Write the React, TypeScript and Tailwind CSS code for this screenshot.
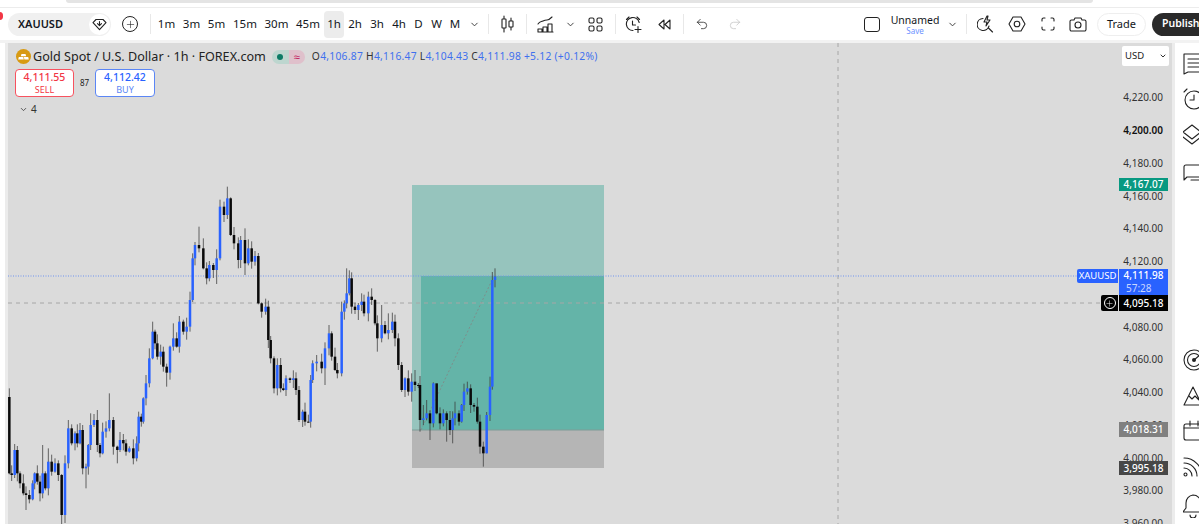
import React from "react";
import { ChevronDown, Undo2, Redo2, Plus } from "lucide-react";

const A: number[][] = [[28,880,625],[35,885],[44,810],[52,880],[60,910],[70,940],[78,945,0,990],[88,958],[98,910],[104,880],[112,905],[120,940],[128,880,795],[136,925],[145,845,805],[155,875],[165,850],[175,885],[185,1005,0,1032],[195,850],[205,745,720],[215,790],[225,760],[232,790],[240,750],[248,865],[258,860,0,925],[265,795],[272,735,700],[282,720],[292,795,690],[300,820],[308,755],[318,745],[328,720,640],[340,800],[352,810,0,850],[360,780],[370,790],[378,815],[388,805],[400,835],[410,790],[416,710],[424,725],[430,655],[438,610,585],[448,535,505],[458,455,425],[465,490],[472,530],[482,515],[490,560],[500,578,0,620],[510,500],[520,475,430],[530,500],[538,425,408],[550,455],[560,440],[570,360,335],[578,235],[585,195],[597,205,140],[610,265,175],[620,295],[628,255],[640,270],[650,235,0,312],[660,80],[672,105],[682,55,20],[692,165],[702,190],[715,240,0,265],[722,180],[735,250,145,285],[745,205],[755,245],[765,228],[775,370],[785,395],[797,380],[805,480],[812,535],[822,625,0,640],[832,555,535],[842,625],[850,630],[858,595],[870,600],[880,595],[888,630],[897,720]];
const B: number[][] = [[128,485],[135,515],[145,515],[152,390],[158,340],[170,335,315],[185,355],[195,295,0,405],[207,250,225],[215,320],[225,360],[232,370,0,385],[245,185,155],[253,160],[260,130,55],[268,85],[275,170],[285,180],[295,165,0,210],[305,155,130],[312,190],[325,140,125],[335,150,115],[345,220],[352,265,0,305],[365,225,165],[375,250],[385,240,190],[397,215],[405,265],[415,345],[425,420],[435,385],[445,425],[455,395,370,455],[465,405,360],[475,405],[480,510,0,545],[490,505,465],[500,490,450],[510,520,0,570],[520,400],[530,490,425],[540,520],[550,490],[560,510,0,575],[570,540],[578,505,0,580],[585,490,455],[597,515],[605,465],[612,425],[622,415,395],[632,465],[642,470],[652,515],[660,590],[670,610,0,650],[680,495,0,610],[690,410,380],[697,90],[705,80,55,112]];

const candles = [
  ...A.map(([x, y, t, b]) => [x / 3, 180 + y / 3, t ? 180 + t / 3 : 0, b ? 180 + b / 3 : 0]),
  ...B.map(([x, y, t, b]) => [260 + x / 3, 250 + y / 3, t ? 250 + t / 3 : 0, b ? 250 + b / 3 : 0]),
];

function Candles() {
  return (
    <>
      {candles.map(([x, c, t, b], i) => {
        const o = i === 0 ? 397 : candles[i - 1][1];
        const top = Math.min(o, c);
        const bot = Math.max(o, c);
        const up = 1 + ((i * 7) % 9);
        const dn = 1 + ((i * 5) % 8);
        const blue = c < o;
        return (
          <g key={i}>
            <line x1={x} x2={x} y1={t || top - up} y2={b || bot + dn} stroke="#3a3a3a" strokeOpacity="0.75" strokeWidth="1" />
            <rect x={x - 1.25} y={top} width="2.5" height={Math.max(bot - top, 1)} fill={blue ? "#2962ff" : "#0a0a0a"} />
          </g>
        );
      })}
    </>
  );
}

const frames = [
  ["1m", "w-[25px]"], ["3m", "w-[25px]"], ["5m", "w-[25px]"], ["15m", "w-[32px]"], ["30m", "w-[31px]"], ["45m", "w-[32px]"],
  ["1h", "w-[20px] bg-[#ececec] rounded"], ["2h", "w-[22px]"], ["3h", "w-[22px]"], ["4h", "w-[22px]"], ["D", "w-[17px]"], ["W", "w-[19px]"], ["M", "w-[18px]"],
];

const Divider = () => <div className="h-[20px] w-px bg-[#e8e8e8] shrink-0" />;

const ticks = ["4,220.00", "4,200.00", "4,180.00", "4,160.00", "4,140.00", "4,120.00", "", "4,080.00", "4,060.00", "4,040.00", "4,020.00", "4,000.00", "3,980.00", "3,960.00"];

const stroke = { fill: "none", stroke: "#222", strokeWidth: 1.1, strokeLinecap: "round", strokeLinejoin: "round" } as const;

export default function App() {
  return (
    <div className="relative w-[1199px] h-[524px] overflow-hidden bg-white flex flex-col font-['Noto_Sans',sans-serif] text-[#131722]">
      {/* browser strip */}
      <div className="h-[8px] shrink-0 bg-white border-b border-[#ececec]">
        <div className="ml-[66px] w-[1027px] h-[3px] bg-[#e4e4e4] rounded-b-md" />
      </div>
      <div className="absolute left-[-4px] top-[12px] w-[7px] h-[8px] rounded-full bg-[#f23645]" />

      {/* toolbar */}
      <div className="h-[32px] shrink-0 flex items-center bg-white">
        <div className="ml-[8px] w-[103px] h-[23px] rounded-full bg-[#f0f0f0] flex items-center pl-[10px] pr-[1px] justify-between shrink-0">
          <span className="text-[11px] font-semibold text-[#131722]">XAUUSD</span>
          <span className="w-[21px] h-[21px] rounded-full bg-white flex items-center justify-center">
            <svg width="15" height="13" viewBox="0 0 15 13">
              <path d="M4 1.5h7l3 3.2-6.5 7-6.5-7z" {...stroke} />
              <path d="M7.5 3.5v4M5.5 5.7l2 2 2-2" {...stroke} />
            </svg>
          </span>
        </div>
        <span className="ml-[11px] w-[16px] h-[16px] rounded-full border border-[#222] flex items-center justify-center shrink-0">
          <Plus size={11} strokeWidth={1.3} color="#222" />
        </span>
        <div className="ml-[12px] mr-[3px]"><Divider /></div>
        {frames.map(([t, w]) => (
          <span key={t} className={`${w} h-[27px] flex items-center justify-center text-[11.5px] shrink-0`}>{t}</span>
        ))}
        <span className="w-[20px] flex justify-center shrink-0"><ChevronDown size={11} color="#333" /></span>
        <div className="ml-[4px]"><Divider /></div>
        <span className="w-[37px] flex justify-center shrink-0">
          <svg width="15" height="18" viewBox="0 0 15 18">
            <path d="M4 1v16M11 3v12" {...stroke} />
            <rect x="2" y="4" width="4" height="9" fill="#fff" stroke="#222" strokeWidth="1.1" rx="0.5" />
            <rect x="9" y="6" width="4" height="6" fill="#fff" stroke="#222" strokeWidth="1.1" rx="0.5" />
          </svg>
        </span>
        <Divider />
        <span className="w-[36px] flex justify-center shrink-0">
          <svg width="17" height="17" viewBox="0 0 17 17">
            <path d="M1 8c2-3 3-2 5-3s3-1 4-1 3-1 5-3" {...stroke} />
            <path d="M1 16v-3h4v3M6 16v-5h4v5M11 16V8h4v8M1 16h15" {...stroke} />
          </svg>
        </span>
        <span className="-ml-[1px] w-[16px] flex justify-center shrink-0"><ChevronDown size={11} color="#333" /></span>
        <span className="ml-[8px] w-[18px] flex justify-center shrink-0">
          <svg width="15" height="15" viewBox="0 0 15 15">
            <rect x="1" y="1" width="5" height="5" rx="1.5" {...stroke} />
            <rect x="9" y="1" width="5" height="5" rx="1.5" {...stroke} />
            <rect x="1" y="9" width="5" height="5" rx="1.5" {...stroke} />
            <rect x="9" y="9" width="5" height="5" rx="1.5" {...stroke} />
          </svg>
        </span>
        <div className="ml-[11px]"><Divider /></div>
        <span className="w-[35px] flex justify-center shrink-0">
          <svg width="17" height="17" viewBox="0 0 17 17">
            <path d="M14.2 6.5A6.5 6.5 0 1 0 8 14.5M1.5 3.5L4 1M12 1l2.5 2.5M7.5 5v4h3M13 10.5v6M10 13.5h6" {...stroke} />
          </svg>
        </span>
        <span className="w-[26px] flex justify-center shrink-0">
          <svg width="13" height="11" viewBox="0 0 13 11">
            <path d="M6 1L1 5.500 6 10zM12 1L7 5.500 12 10z" {...stroke} />
          </svg>
        </span>
        <span className="ml-[6px]"><Divider /></span>
        <span className="w-[36px] flex justify-center shrink-0"><Undo2 size={14} strokeWidth={1.3} color="#222" /></span>
        <span className="ml-[2px] w-[26px] flex justify-center shrink-0"><Redo2 size={14} strokeWidth={1.3} color="#c4c4c4" /></span>

        <span className="ml-[116px] w-[16px] h-[15px] rounded-[3px] border border-[#222] shrink-0" />
        <div className="ml-[11px] w-[48px] flex flex-col items-center leading-none shrink-0">
          <span className="text-[10.5px] leading-[12px]">Unnamed</span>
          <span className="text-[8px] leading-[9px] text-[#2962ff] opacity-70">Save</span>
        </div>
        <span className="ml-[6px] w-[15px] flex justify-center shrink-0"><ChevronDown size={11} color="#333" /></span>
        <span className="ml-[6px]"><Divider /></span>
        <span className="ml-[9px] w-[18px] flex justify-center shrink-0">
          <svg width="17" height="18" viewBox="0 0 17 18">
            <path d="M6 3.500A6 6 0 1 0 12 11M11.500 13l4 4" {...stroke} />
            <path d="M10 1L7 7h3l-1 4 4-6h-3l1-4z" {...stroke} />
          </svg>
        </span>
        <span className="ml-[13px] w-[20px] flex justify-center shrink-0">
          <svg width="18" height="16" viewBox="0 0 18 16">
            <path d="M5 1h8l4 7-4 7H5L1 8z" {...stroke} />
            <circle cx="9" cy="8" r="2.800" {...stroke} />
          </svg>
        </span>
        <span className="ml-[14px] w-[14px] flex justify-center shrink-0">
          <svg width="14" height="14" viewBox="0 0 14 14">
            <path d="M1 4V2.500A1.500 1.500 0 0 1 2.500 1H4M10 1h1.500A1.500 1.500 0 0 1 13 2.500V4M13 10v1.500a1.500 1.500 0 0 1-1.500 1.500H10M4 13H2.500A1.500 1.500 0 0 1 1 11.500V10" {...stroke} />
          </svg>
        </span>
        <span className="ml-[13px] w-[20px] flex justify-center shrink-0">
          <svg width="18" height="15" viewBox="0 0 18 15">
            <path d="M1 4.500a1.500 1.500 0 0 1 1.500-1.500H5l1-2h6l1 2h2.500A1.500 1.500 0 0 1 17 4.500v8a1.500 1.500 0 0 1-1.500 1.500h-13A1.500 1.500 0 0 1 1 12.500z" {...stroke} />
            <circle cx="9" cy="8" r="3" {...stroke} />
          </svg>
        </span>
        <span className="ml-[9px] w-[49px] h-[23px] rounded-full border border-[#eeeeee] flex items-center justify-center text-[11px] shrink-0">Trade</span>
        <span className="ml-[6px] w-[60px] h-[23px] rounded-full bg-[#2a2a2a] text-white flex items-center pl-[10px] text-[10.5px] font-semibold shrink-0">Publish</span>
      </div>

      <div className="h-[3px] shrink-0 bg-[#f2f2f2]" />

      {/* main */}
      <div className="flex-1 flex min-h-0">
        <div className="w-[5px] bg-white shrink-0" />
        <div className="w-[3px] bg-[#ececec] shrink-0" />

        {/* chart */}
        <div className="w-[1164px] shrink-0 relative bg-[#dbdbdb] overflow-hidden">
          <svg className="absolute inset-0" width="1164" height="481" viewBox="8 43 1164 481">
            <rect x="412" y="185" width="192" height="91" fill="#96c4bd" />
            <rect x="412" y="276" width="9" height="154" fill="#96c4bd" />
            <rect x="421" y="276" width="183" height="154" fill="#64b4a8" />
            <rect x="412" y="430" width="192" height="38" fill="#b5b5b5" />
            <line x1="412" x2="604" y1="430" y2="430" stroke="#7f9c97" strokeWidth="1" />
            <line x1="421" y1="430" x2="493" y2="278" stroke="#7d8f8b" strokeWidth="1" strokeDasharray="2 2" />
            <line x1="838" x2="838" y1="43" y2="524" stroke="#a6a6a6" strokeWidth="1" strokeDasharray="4 4" />
            <line x1="8" x2="1101" y1="303" y2="303" stroke="#a6a6a6" strokeWidth="1" strokeDasharray="4 4" />
            <line x1="8" x2="1078" y1="276" y2="276" stroke="#6f93ee" strokeWidth="1" strokeDasharray="1 1.500" />
            <Candles />
          </svg>

          {/* legend */}
          <div className="absolute left-[7px] top-[5px] flex flex-col items-start">
            <div className="flex items-center h-[17px] whitespace-nowrap">
              <svg width="15" height="15" viewBox="0 0 15 15" className="shrink-0 ml-[1px]">
                <circle cx="7.500" cy="7.500" r="7.500" fill="#d89a12" />
                <path d="M5.500 5h4l.7 2.200H4.800zM2.800 8h4.400l.6 2.400H2.200zM7.800 8h4.400l.6 2.400H8.400z" fill="#fff" />
              </svg>
              <span className="ml-[2px] text-[12.6px] leading-[17px] text-[#222]">Gold Spot / U.S. Dollar · 1h · FOREX.com</span>
              <span className="ml-[6px] flex h-[14px] w-[33px] rounded-full overflow-hidden">
                <span className="w-[17px] bg-[#bdd6cf] flex items-center justify-center"><span className="w-[6px] h-[6px] rounded-full bg-[#0b7a65]" /></span>
                <span className="w-[16px] bg-[#dfc0cb] flex items-center justify-center text-[#c2185b] text-[11px] leading-[14px]">≈</span>
              </span>
              <span className="ml-[7px] text-[10.3px] tracking-[0.26px] text-[#3f70ee]"><span className="text-[#333]">O</span>4,106.87 <span className="text-[#333]">H</span>4,116.47 <span className="text-[#333]">L</span>4,104.43 <span className="text-[#333]">C</span>4,111.98 +5.12 (+0.12%)</span>
            </div>
            <div className="mt-[4px] flex items-center">
              <div className="w-[59px] h-[28px] rounded-[4px] border border-[#f7525f] bg-white flex flex-col items-center justify-center leading-none">
                <span className="text-[10.5px] leading-[13px] font-medium text-[#f23645]">4,111.55</span>
                <span className="text-[9px] leading-[11px] text-[#f23645]">SELL</span>
              </div>
              <span className="w-[21px] text-center text-[8px] text-[#222]">87</span>
              <div className="w-[60px] h-[28px] rounded-[4px] border border-[#5b86f5] bg-white flex flex-col items-center justify-center leading-none">
                <span className="text-[10.5px] leading-[13px] font-medium text-[#2962ff]">4,112.42</span>
                <span className="text-[9px] leading-[11px] text-[#5b86f5]">BUY</span>
              </div>
            </div>
            <div className="mt-[6px] ml-[4px] flex items-center gap-[3px] text-[10px] leading-[13px] text-[#333]">
              <ChevronDown size={9} color="#333" />
              <span>4</span>
            </div>
          </div>

          {/* currency */}
          <div className="absolute left-[1114px] top-[3px] w-[47px] h-[20px] rounded-[2px] bg-white flex items-center justify-between pl-[3px] pr-[2px] text-[9.5px] text-[#222]">
            <span>USD</span>
            <ChevronDown size={8} strokeWidth={3} color="#333" />
          </div>

          {/* price scale */}
          <div className="absolute right-[9px] top-[38.500px] flex flex-col items-end">
            {ticks.map((t, i) => (
              <div key={i} className={`h-[32.750px] flex items-center text-[10px] ${t === "4,200.00" ? "font-semibold text-[#111]" : "text-[#333]"}`}>{t}</div>
            ))}
          </div>

          {/* price tags */}
          <div className="absolute left-[1111px] top-[135px] w-[49px] h-[13px] bg-[#089981] text-white text-[10px] leading-[13px] text-center font-medium">4,167.07</div>
          <div className="absolute left-[1069px] top-[226px] w-[41px] h-[14px] bg-[#2962ff] rounded-l-[2px] text-white text-[9.500px] leading-[14px] text-center">XAUUSD</div>
          <div className="absolute left-[1111px] top-[226px] w-[49px] h-[26px] bg-[#2962ff] text-white text-[10px] leading-[13px] text-center font-medium">
            <div>4,111.98</div>
            <div className="text-[#c9d7ff] font-normal text-left pl-[7px]">57:28</div>
          </div>
          <div className="absolute left-[1093px] top-[252px] w-[17px] h-[16px] bg-black rounded-l-[2px] flex items-center justify-center">
            <span className="w-[12px] h-[12px] rounded-full border border-white flex items-center justify-center"><Plus size={9} strokeWidth={1.300} color="#fff" /></span>
          </div>
          <div className="absolute left-[1111px] top-[252px] w-[49px] h-[16px] bg-black text-white text-[10px] leading-[16px] text-center font-medium">4,095.18</div>
          <div className="absolute left-[1111px] top-[379px] w-[49px] h-[15px] bg-[#808080] text-white text-[10px] leading-[15px] text-center font-medium">4,018.31</div>
          <div className="absolute left-[1111px] top-[418px] w-[49px] h-[14px] bg-[#474747] text-white text-[10px] leading-[14px] text-center font-medium">3,995.18</div>
        </div>

        <div className="w-[3px] bg-[#ececec] shrink-0" />

        {/* right sidebar */}
        <div className="flex-1 bg-white flex flex-col overflow-hidden pl-[8px]">
          <svg className="mt-[9px] shrink-0" width="24" height="24" viewBox="0 0 24 24">
            <path d="M1 2h20v20l-4-2H5l-4 2zM5 7h15M5 11h15M5 15h15" {...stroke} />
          </svg>
          <svg className="mt-[11px] shrink-0" width="24" height="24" viewBox="0 0 24 24">
            <circle cx="11" cy="13" r="9" {...stroke} />
            <path d="M1 5l3-3M11 8v5H7" {...stroke} />
          </svg>
          <svg className="mt-[13px] shrink-0" width="24" height="24" viewBox="0 0 24 24">
            <path d="M0 8l9-7 9 7-9 7zM0 13l9 7 9-7" {...stroke} />
          </svg>
          <svg className="mt-[14px] shrink-0" width="24" height="24" viewBox="0 0 24 24">
            <path d="M1 18V5a2 2 0 0 1 2-2h18M1 18l3-3h18M8 18h14" {...stroke} />
          </svg>
          <svg className="mt-[163px] shrink-0" width="24" height="24" viewBox="0 0 24 24">
            <circle cx="11" cy="11" r="10" {...stroke} />
            <circle cx="11" cy="11" r="6.500" {...stroke} />
            <circle cx="11" cy="11" r="2" fill="#222" />
            <path d="M11 11l7-6" {...stroke} />
          </svg>
          <svg className="mt-[11px] shrink-0" width="24" height="24" viewBox="0 0 24 24">
            <path d="M1 21L10 3l9 18zM6 12l3 3 3-3 4 4" {...stroke} />
          </svg>
          <svg className="mt-[11px] shrink-0" width="24" height="24" viewBox="0 0 24 24">
            <rect x="1" y="5" width="22" height="16" rx="2" {...stroke} />
            <path d="M1 9h22M7 2v5M15 2v5" {...stroke} />
          </svg>
          <svg className="mt-[11px] shrink-0" width="24" height="24" viewBox="0 0 24 24">
            <path d="M1 9a13 13 0 0 1 13 13M1 4a18 18 0 0 1 18 18M1 14a8 8 0 0 1 8 8" {...stroke} />
            <circle cx="2.500" cy="20.500" r="1.500" {...stroke} />
          </svg>
          <svg className="mt-[16px] shrink-0" width="24" height="24" viewBox="0 0 24 24">
            <path d="M10 1a8 8 0 0 1 8 8v5l3 4H0l3-4V9a8 8 0 0 1 7-8zM7 21a3 3 0 0 0 6 0" {...stroke} />
          </svg>
        </div>
      </div>
    </div>
  );
}
